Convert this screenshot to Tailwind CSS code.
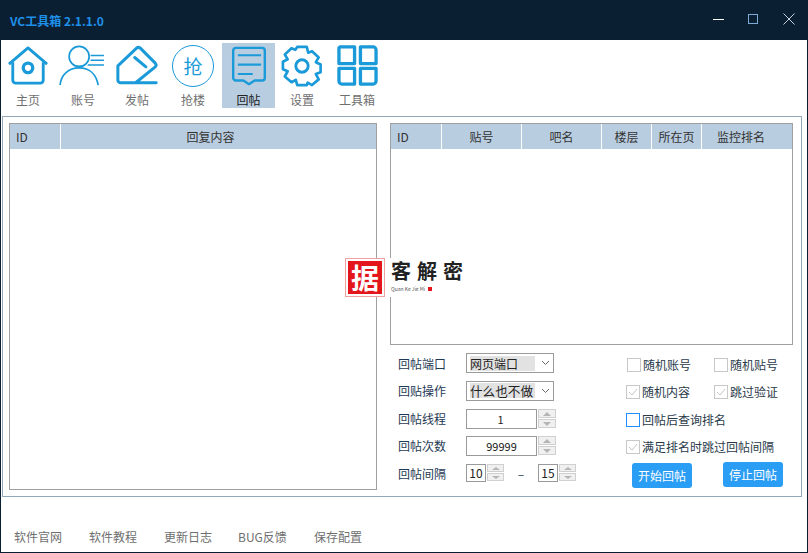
<!DOCTYPE html>
<html lang="zh-CN">
<head>
    <meta charset="UTF-8">
    <title>VC工具箱</title>
    <script src="https://cdn.jsdelivr.net/npm/@tailwindcss/browser@4"></script>
    <style>
        body { font-family: "Noto Sans CJK SC", "Liberation Sans", sans-serif; }
    </style>
</head>
<body class="w-[808px] h-[553px] overflow-hidden bg-[#0b1f33] relative">

    <!-- 标题栏 -->
    <div class="h-10 flex items-center justify-between pl-[10px] text-[#1e90e8]">
        <div class="text-[12px] font-bold mt-[2px]">VC工具箱 2.1.1.0</div>
        <div class="flex items-center pr-[13px] mb-[2px]">
            <div class="w-[11px] h-px bg-white"></div>
            <div class="ml-[24px] w-[10px] h-[10px] border border-[#7fa9d6]"></div>
            <svg class="ml-[25px]" width="12" height="12" viewBox="0 0 12 12" stroke="#c8d2dc" stroke-width="1"><path d="M.5.5l11 11M11.5.5l-11 11"/></svg>
        </div>
    </div>

    <div class="ml-px mr-px h-[512px] bg-white flex flex-col">
        <!-- 顶部工具栏 -->
        <div class="h-[76px] flex pl-[2px] pt-[3px] text-[12px] leading-4 text-[#6f6f6f]">
            <div class="w-[50px] h-[65px] flex flex-col items-center justify-between">
                <svg class="mt-[2px]" width="42" height="40" viewBox="0 0 44 42" fill="none" stroke="#1a9ad8" stroke-width="3" stroke-linejoin="round"><path d="M2 20L22 3l20 17"/><path d="M6 18v19a3 3 0 0 0 3 3h26a3 3 0 0 0 3-3V18"/><circle cx="22" cy="24" r="5" stroke-width="3.500"/></svg>
                <span>主页</span>
            </div>
            <div class="w-[60px] h-[65px] flex flex-col items-center justify-between">
                <svg class="mt-[2px] -ml-[3px]" width="46" height="41" viewBox="0 0 48 43" fill="none" stroke="#1a9ad8" stroke-width="1.800"><circle cx="21" cy="12" r="10.500"/><path d="M1 42c1-11 9-18 20-18s18 7 20 18"/><path d="M33 11h14M33 16h14M30 21h17" stroke-width="1.500"/></svg>
                <span>账号</span>
            </div>
            <div class="w-[48px] h-[65px] flex flex-col items-center justify-between">
                <svg class="mt-[2px] ml-px" width="43" height="40" viewBox="0 0 46 42" fill="none" stroke="#1a9ad8" stroke-width="3.200" stroke-linejoin="round" stroke-linecap="round"><path d="M21 40H5a3 3 0 0 1-3-3V22L22 3a3 3 0 0 1 4 0l16 16a3 3 0 0 1 0 4L21 40h22"/><path d="M20 13l12 10"/></svg>
                <span>发帖</span>
            </div>
            <div class="ml-[3px] w-[58px] h-[65px] flex flex-col items-center justify-between">
                <div class="w-[42px] h-[42px] mt-[2px] rounded-full border-[1.500px] border-[#1a9ad8] flex items-center justify-center text-[19px] text-[#1a9ad8]">抢</div>
                <span>抢楼</span>
            </div>
            <div class="w-[53px] h-[65px] flex flex-col items-center justify-between bg-[#b9cde0] text-[#222]">
                <svg class="mt-[3px]" width="38" height="40" viewBox="0 0 38 43" fill="none" stroke="#1a9ad8" stroke-width="2.600" stroke-linejoin="round"><path d="M5 2h28a3 3 0 0 1 3 3v29a3 3 0 0 1-3 3h-8l-6 4-6-4H5a3 3 0 0 1-3-3V5a3 3 0 0 1 3-3z"/><path d="M7 10h25M7 20h25M7 30h16" stroke-width="2.200"/></svg>
                <span>回帖</span>
            </div>
            <div class="w-[54px] h-[65px] flex flex-col items-center justify-between">
                <svg class="mt-[2px]" width="42" height="42" viewBox="0 0 44 44" fill="none" stroke="#1a9ad8" stroke-width="2.800" stroke-linejoin="round"><path d="M17 2h10l1.500 6 4-1.500 7 6.500-3 5 5 2.500v8l-5 2 3 5.500-7 6-4.500-2.500L27 42H17l-1.500-5.500-4.500 2.500-7-6 3-5.500-5-2v-8l5-2.500-3-5 7-6.500 4 1.500z"/><circle cx="22" cy="22" r="6.500" stroke-width="3"/></svg>
                <span>设置</span>
            </div>
            <div class="w-[56px] h-[65px] flex flex-col items-center justify-between">
                <svg class="mt-[2px]" width="41" height="41" viewBox="0 0 42 42" fill="none" stroke="#1a9ad8" stroke-width="3.400" stroke-linejoin="round"><path d="M3 2h15v17H2V3zM24 2h13a3 3 0 0 1 3 3v14H24zM2 24h16v16H5a3 3 0 0 1-3-3zM24 24h16v13a3 3 0 0 1-3 3H24z"/></svg>
                <span>工具箱</span>
            </div>
        </div>

        <!-- 主面板 -->
        <div class="ml-px mr-[5px] h-[381px] border border-[#93a8b8] flex pl-[6px] pr-[8px] pt-[6px] text-[12px]">
            <!-- 左表 -->
            <div class="w-[368px] h-[367px] border border-[#a0a0a0] shrink-0">
                <div class="h-[25px] flex bg-[#b9cde0] text-[#333] leading-[25px]">
                    <div class="w-[51px] pl-[6px] border-r border-white">ID</div>
                    <div class="flex-1 text-center pr-4">回复内容</div>
                </div>
            </div>

            <div class="ml-[13px] flex-1 flex flex-col">
                <!-- 右表 -->
                <div class="h-[222px] border border-[#a0a0a0]">
                    <div class="h-[25px] flex bg-[#b9cde0] text-[#333] leading-[25px]">
                        <div class="w-[51px] pl-[6px] border-r border-white">ID</div>
                        <div class="w-[80px] text-center border-r border-white">贴号</div>
                        <div class="w-[80px] text-center border-r border-white">吧名</div>
                        <div class="w-[50px] text-center border-r border-white">楼层</div>
                        <div class="w-[50px] text-center border-r border-white">所在页</div>
                        <div class="flex-1 text-center pr-3">监控排名</div>
                    </div>
                </div>

                <!-- 设置区 -->
                <div class="flex mt-[6px] text-[#1f3a55]">
                    <div class="w-[200px] pl-2 flex flex-col">
                        <div class="h-[26px] flex items-center">
                            <span class="w-[68px]">回帖端口</span>
                            <div class="w-[88px] h-5 mb-[2px] border border-[#9a9a9a] flex items-center bg-white pl-[3px] text-[#222]"><span class="bg-[#e2e2e2] w-[65px] h-[15px] leading-[15px]">网页端口</span><svg class="ml-[6px]" width="9" height="6" viewBox="0 0 9 6" fill="none" stroke="#666"><path d="M1 1l3.500 3.500L8 1"/></svg></div>
                        </div>
                        <div class="h-[27px] flex items-center">
                            <span class="w-[68px]">回贴操作</span>
                            <div class="w-[88px] h-5 border border-[#9a9a9a] flex items-center bg-white pl-[3px] text-[#222]"><span class="bg-[#e2e2e2] w-[65px] h-[15px] leading-[15px] whitespace-nowrap text-[12.600px]">什么也不做</span><svg class="ml-[6px]" width="9" height="6" viewBox="0 0 9 6" fill="none" stroke="#666"><path d="M1 1l3.500 3.500L8 1"/></svg></div>
                        </div>
                        <div class="h-[27px] mt-px flex items-center">
                            <span class="w-[68px]">回帖线程</span>
                            <div class="w-[71px] h-[20px] border border-[#9a9a9a] text-center text-[11px] leading-[18px] text-[#222] pr-[2px]">1</div>
                            <div class="ml-px flex flex-col gap-px">
                                <div class="w-[18px] h-[9px] bg-[#f0f0f0] border border-[#d0d0d0] flex items-center justify-center"><div class="border-x-4 border-x-transparent border-b-[4px] border-b-[#b5b5b5]"></div></div>
                                <div class="w-[18px] h-[9px] bg-[#f0f0f0] border border-[#d0d0d0] flex items-center justify-center"><div class="border-x-4 border-x-transparent border-t-[4px] border-t-[#b5b5b5]"></div></div>
                            </div>
                        </div>
                        <div class="h-[27px] flex items-center">
                            <span class="w-[68px]">回帖次数</span>
                            <div class="w-[71px] h-[20px] border border-[#9a9a9a] text-center text-[11px] leading-[18px] text-[#222]">99999</div>
                            <div class="ml-px flex flex-col gap-px">
                                <div class="w-[18px] h-[9px] bg-[#f0f0f0] border border-[#d0d0d0] flex items-center justify-center"><div class="border-x-4 border-x-transparent border-b-[4px] border-b-[#b5b5b5]"></div></div>
                                <div class="w-[18px] h-[9px] bg-[#f0f0f0] border border-[#d0d0d0] flex items-center justify-center"><div class="border-x-4 border-x-transparent border-t-[4px] border-t-[#b5b5b5]"></div></div>
                            </div>
                        </div>
                        <div class="h-[29px] flex items-center">
                            <span class="w-[68px]">回帖间隔</span>
                            <div class="w-5 h-[18px] mb-[2px] border border-[#9a9a9a] text-center text-[12px] leading-[16px] text-[#222]">10</div>
                            <div class="ml-px mb-[2px] flex flex-col gap-px">
                                <div class="w-[17px] h-[8px] bg-[#f0f0f0] border border-[#d0d0d0] flex items-center justify-center"><div class="border-x-4 border-x-transparent border-b-[3px] border-b-[#b5b5b5]"></div></div>
                                <div class="w-[17px] h-[8px] bg-[#f0f0f0] border border-[#d0d0d0] flex items-center justify-center"><div class="border-x-4 border-x-transparent border-t-[3px] border-t-[#b5b5b5]"></div></div>
                            </div>
                            <span class="w-[34px] text-center">–</span>
                            <div class="w-5 h-[18px] mb-[2px] border border-[#9a9a9a] text-center text-[12px] leading-[16px] text-[#222]">15</div>
                            <div class="ml-px mb-[2px] flex flex-col gap-px">
                                <div class="w-[17px] h-[8px] bg-[#f0f0f0] border border-[#d0d0d0] flex items-center justify-center"><div class="border-x-4 border-x-transparent border-b-[3px] border-b-[#b5b5b5]"></div></div>
                                <div class="w-[17px] h-[8px] bg-[#f0f0f0] border border-[#d0d0d0] flex items-center justify-center"><div class="border-x-4 border-x-transparent border-t-[3px] border-t-[#b5b5b5]"></div></div>
                            </div>
                        </div>
                    </div>

                    <div class="ml-[36px] mt-[1px] flex-1 flex flex-col text-[#2a3a4a]">
                        <div class="h-[26px] flex items-center">
                            <div class="w-[88px] flex items-center gap-[2px]"><div class="w-[14px] h-[14px] border border-[#c8c8c8] ml-px"></div>随机账号</div>
                            <div class="flex items-center gap-[2px]"><div class="w-[14px] h-[14px] border border-[#c8c8c8]"></div>随机贴号</div>
                        </div>
                        <div class="h-7 flex items-center">
                            <div class="w-[88px] flex items-center gap-[2px]"><svg width="14" height="14" viewBox="0 0 14 14" fill="none"><rect x=".5" y=".5" width="13" height="13" stroke="#c8c8c8"/><path d="M3 7l3 3 5-6" stroke="#c4c4c4"/></svg>随机内容</div>
                            <div class="flex items-center gap-[2px]"><svg width="14" height="14" viewBox="0 0 14 14" fill="none"><rect x=".5" y=".5" width="13" height="13" stroke="#c8c8c8"/><path d="M3 7l3 3 5-6" stroke="#c4c4c4"/></svg>跳过验证</div>
                        </div>
                        <div class="h-[27px] flex items-center gap-[2px]"><div class="w-[14px] h-[14px] border border-[#1e90ff]"></div>回帖后查询排名</div>
                        <div class="h-[27px] flex items-center gap-[2px]"><svg width="14" height="14" viewBox="0 0 14 14" fill="none"><rect x=".5" y=".5" width="13" height="13" stroke="#c8c8c8"/><path d="M3 7l3 3 5-6" stroke="#c4c4c4"/></svg>满足排名时跳过回帖间隔</div>
                        <div class="flex mt-[2px]">
                            <div class="ml-[6px] w-[60px] h-[25px] mt-px rounded-[3px] bg-[#2a9df4] text-white text-center leading-[25px]">开始回帖</div>
                            <div class="ml-[31px] w-[60px] h-[25px] rounded-[3px] bg-[#2a9df4] text-white text-center leading-[25px]">停止回帖</div>
                        </div>
                    </div>
                </div>
            </div>
        </div>

        <!-- 底部链接 -->
        <div class="mt-[31px] flex pl-[13px] gap-[27px] text-[12px] text-[#6f6f6f]">
            <span>软件官网</span><span>软件教程</span><span>更新日志</span><span class="-ml-px w-[49px]">BUG反馈</span><span>保存配置</span>
        </div>
    </div>

    <!-- 水印 -->
    <div class="absolute left-[345px] top-[258px] flex">
        <div class="w-[40px] h-[39px] p-[2px] bg-white border border-[#f0a0a0]">
            <div class="w-full h-full bg-[#e3161b] text-white text-[28px] font-bold leading-[33px] text-center">据</div>
        </div>
        <div class="ml-[5px] w-[78px] h-[39px] bg-white flex flex-col">
            <div class="text-[20px] font-bold leading-[26px] tracking-[6px] text-[#222] whitespace-nowrap pl-px">客解密</div>
            <div class="mt-[2px] flex items-center gap-[3px] text-[5px] leading-[6px] text-[#555] whitespace-nowrap pl-px">Quan Ke Jie Mi <span class="w-1 h-1 bg-[#e3161b]"></span></div>
        </div>
    </div>
</body>
</html>
